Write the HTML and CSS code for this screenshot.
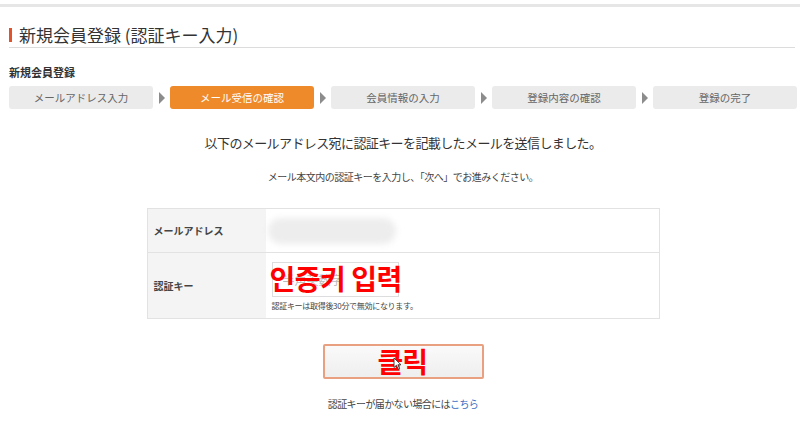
FILE: index.html
```html
<!DOCTYPE html>
<html lang="ja">
<head>
    <meta charset="UTF-8">
    <meta name="viewport" content="width=device-width, initial-scale=1.0">
    <title>新規会員登録（認証キー入力）</title>
    <link rel="stylesheet" href="styles.css">
</head>
<body>
    <div class="top-line"></div>

    <div class="page">
        <h1 class="page-title">新規会員登録 (認証キー入力)</h1>

        <h2 class="section-title">新規会員登録</h2>

        <ol class="steps">
            <li class="step">メールアドレス入力</li>
            <li class="step-arrow"></li>
            <li class="step current">メール受信の確認</li>
            <li class="step-arrow"></li>
            <li class="step">会員情報の入力</li>
            <li class="step-arrow"></li>
            <li class="step">登録内容の確認</li>
            <li class="step-arrow"></li>
            <li class="step">登録の完了</li>
        </ol>

        <p class="lead">以下のメールアドレス宛に認証キーを記載したメールを送信しました。</p>
        <p class="sub">メール本文内の認証キーを入力し、「次へ」でお進みください。</p>

        <table class="form-table">
            <tr class="row-mail">
                <th>メールアドレス</th>
                <td><div class="blurred"></div></td>
            </tr>
            <tr class="row-key">
                <th>認証キー</th>
                <td>
                    <div class="key-field">
                        <input type="text" class="key-input" placeholder="半角英数字">
                        <span class="overlay-label">인증키 입력</span>
                    </div>
                    <p class="note">認証キーは取得後30分で無効になります。</p>
                </td>
            </tr>
        </table>

        <div class="btn-wrap">
            <button class="next-btn">
                <span class="overlay-label">클릭</span>
                <svg class="cursor" width="9" height="13" viewBox="0 0 9 13">
                    <path d="M1 1 L1 10.5 L3.4 8.3 L5.2 12.2 L6.6 11.6 L4.9 7.8 L8 7.8 Z" fill="#fff" stroke="#333" stroke-width="0.9"/>
                </svg>
            </button>
        </div>

        <p class="help">認証キーが届かない場合には<a href="#">こちら</a></p>
    </div>
</body>
</html>
```

FILE: styles.css
```css
/* Base */
body {
    margin: 0;
    font-family: "Noto Sans CJK JP", "Noto Sans", sans-serif;
    color: #333;
    background: #fff;
}

.top-line {
    height: 3px;
    margin-top: 4px;
    background: #e6e6e6;
}

.page {
    margin: 0 3px 0 9px;
}

/* Titles */
.page-title {
    display: flex;
    align-items: center;
    margin: 18px 2px 0 0;
    padding-bottom: 2px;
    border-bottom: 1px solid #dcdcdc;
    font-size: 17px;
    font-weight: normal;
    line-height: 20px;
    color: #333;
}

.page-title::before {
    content: "";
    width: 3px;
    height: 14px;
    margin-right: 7px;
    background: #e0532b;
}

.section-title {
    margin: 16px 0 0;
    font-size: 11px;
    line-height: 16px;
    font-weight: bold;
    color: #333;
}

/* Steps */
.steps {
    display: flex;
    align-items: center;
    margin: 6px 0 0;
    padding: 0;
    list-style: none;
}

.step {
    flex: 1;
    height: 23px;
    line-height: 23px;
    text-align: center;
    font-size: 10.5px;
    color: #666;
    background: #ebebeb;
    border-radius: 3px;
}

.step.current {
    background: #ef8a2a;
    color: #fff;
}

.step-arrow {
    width: 17px;
    display: flex;
    justify-content: center;
}

.step-arrow::before {
    content: "";
    border-left: 6px solid #8c8c8c;
    border-top: 6px solid transparent;
    border-bottom: 6px solid transparent;
}

/* Messages */
.lead {
    margin: 24px 0 0;
    text-align: center;
    font-size: 13px;
    line-height: 20px;
    letter-spacing: -0.6px;
    color: #333;
}

.sub {
    margin: 16px 0 0;
    text-align: center;
    font-size: 10px;
    line-height: 16px;
    letter-spacing: -0.5px;
    color: #444;
}

/* Form table */
.form-table {
    width: 513px;
    margin: 23px auto 0;
    border-collapse: collapse;
    border: 1px solid #e2e2e2;
}

.form-table th {
    width: 106px;
    padding: 0 6px;
    text-align: left;
    font-size: 10px;
    font-weight: bold;
    color: #444;
    background: #f4f4f4;
    border-bottom: 1px solid #e2e2e2;
}

.form-table td {
    padding: 0 6px;
    border-bottom: 1px solid #e2e2e2;
}

.row-mail th,
.row-mail td {
    height: 43px;
}

.row-key th,
.row-key td {
    height: 65px;
}

.blurred {
    width: 128px;
    height: 26px;
    margin-left: -4px;
    background: #ededed;
    border-radius: 13px;
    filter: blur(3px);
}

.key-field {
    position: relative;
    width: 127px;
    margin-top: 2px;
}

.key-input {
    box-sizing: border-box;
    width: 127px;
    height: 35px;
    padding: 0 0 0 10px;
    border: 1px solid #ddd;
    font-family: "Noto Sans CJK JP", sans-serif;
    font-size: 12px;
    color: #333;
}

.key-input::placeholder {
    color: #bbb;
}

.overlay-label {
    position: absolute;
    font-family: "Noto Sans CJK KR", sans-serif;
    font-weight: bold;
    color: #f00;
    white-space: nowrap;
}

.key-field .overlay-label {
    left: -2px;
    top: -4px;
    font-size: 28px;
    line-height: 40px;
    letter-spacing: -0.5px;
}

.note {
    margin: 3px 0 0;
    font-size: 8px;
    line-height: 12px;
    letter-spacing: -0.3px;
    color: #444;
}

/* Button */
.btn-wrap {
    display: flex;
    justify-content: center;
    margin-top: 25px;
}

.next-btn {
    position: relative;
    width: 161px;
    height: 35px;
    border: 2px solid #e8a080;
    background: linear-gradient(#fafafa, #eeeeee);
    border-radius: 2px;
    cursor: pointer;
}

.next-btn .overlay-label {
    left: 53px;
    top: -4px;
    font-size: 28px;
    line-height: 38px;
    letter-spacing: -1px;
}

.cursor {
    position: absolute;
    left: 68px;
    top: 11px;
}

/* Help */
.help {
    margin: 18px 0 0;
    text-align: center;
    font-size: 10px;
    line-height: 14px;
    letter-spacing: -0.6px;
    color: #444;
}

.help a {
    color: #3a6fc4;
    text-decoration: none;
}
```
